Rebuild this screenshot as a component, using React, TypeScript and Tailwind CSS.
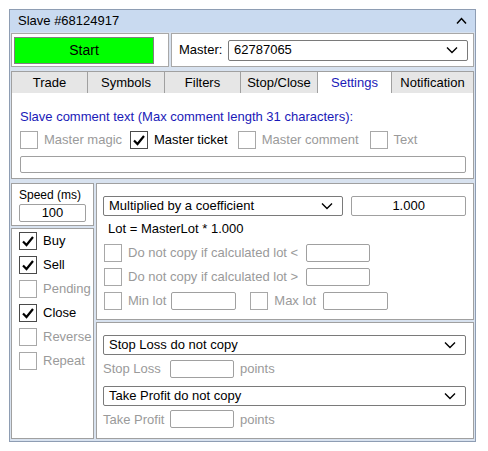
import React from 'react';

const font = { fontFamily: '"Liberation Sans", Arial, sans-serif' };

function Check({ checked = false, disabled = false, label }: { checked?: boolean; disabled?: boolean; label?: string }) {
  return (
    <div className="flex items-center">
      <div
        className={`w-[18px] h-[18px] bg-white border flex items-center justify-center shrink-0 ${
          disabled ? 'border-[#a8a8a8]' : 'border-[#4a4a4a]'
        }`}
      >
        {checked && (
          <svg width="14" height="14" viewBox="0 0 14 14">
            <path d="M2 7.5 L5.5 11 L12 3" fill="none" stroke="#000" strokeWidth="2.2" />
          </svg>
        )}
      </div>
      {label && (
        <span className={`ml-[6px] text-[13px] leading-4 whitespace-nowrap ${disabled ? 'text-[#9a9a9a]' : 'text-black'}`}>
          {label}
        </span>
      )}
    </div>
  );
}

function Chevron() {
  return (
    <svg width="12" height="8" viewBox="0 0 12 8" className="shrink-0">
      <path d="M1 1.5 L6 6.5 L11 1.5" fill="none" stroke="#000" strokeWidth="1.4" />
    </svg>
  );
}

function Select({ text, className = '' }: { text: string; className?: string }) {
  return (
    <div
      className={`h-[20px] bg-white border border-[#7a7a7a] rounded-[2px] flex items-center justify-between pl-[5px] pr-[9px] text-[13px] text-black ${className}`}
    >
      <span>{text}</span>
      <Chevron />
    </div>
  );
}

function Box({ className = '', children }: { className?: string; children?: React.ReactNode }) {
  return (
    <div className={`h-[18px] bg-white border border-[#a0a0a0] rounded-[2px] flex items-center justify-center text-[13px] text-black ${className}`}>
      {children}
    </div>
  );
}

const tabs = [
  { name: 'Trade', w: 'w-[76px]' },
  { name: 'Symbols', w: 'w-[77px]' },
  { name: 'Filters', w: 'w-[76px]' },
  { name: 'Stop/Close', w: 'w-[77px]' },
  { name: 'Settings', w: 'w-[74px]', active: true },
  { name: 'Notification', w: 'w-[83px]' },
];

export default function App() {
  return (
    <div className="w-[488px] h-[451px] bg-white pt-[9px] pl-[9px]" style={font}>
      <div className="w-[467px] h-[433px] border border-[#8e9db3] bg-[#d8e2ef] flex flex-col">
        {/* header */}
        <div className="h-[22px] bg-[#c9daf0] flex items-center justify-between pl-[8px] pr-[8px] text-[13px] text-black">
          <span>Slave #68124917</span>
          <svg width="11" height="8" viewBox="0 0 11 8">
            <path d="M1 6.5 L5.5 1.5 L10 6.5" fill="none" stroke="#000" strokeWidth="1.5" />
          </svg>
        </div>

        {/* start / master */}
        <div className="mt-[1px] ml-[1px] flex gap-[2px] h-[34px]">
          <div className="w-[158px] bg-white border border-[#a8a8a8] flex items-center pl-[2px]">
            <div className="w-[140px] h-[27px] bg-[#00ff00] border border-[#808080] flex items-center justify-center text-[14px] text-black">
              Start
            </div>
          </div>
          <div className="w-[303px] bg-white border border-[#a8a8a8] flex items-center pl-[7px]">
            <span className="text-[13px] text-black w-[49px]">Master:</span>
            <Select text="62787065" className="w-[240px] h-[21px]" />
          </div>
        </div>

        {/* tabs */}
        <div className="mt-[4px] ml-[1px] flex h-[22px]">
          {tabs.map((t, i) => (
            <div
              key={t.name}
              className={`${t.w} border-t border-l border-[#a0a0a0] ${i === tabs.length - 1 ? 'border-r' : ''} flex items-center justify-center text-[13px] ${
                t.active ? 'bg-white text-[#1a1ab8]' : 'bg-[#e6e6e6] text-black'
              }`}
            >
              {t.name}
            </div>
          ))}
        </div>

        {/* settings content */}
        <div className="ml-[1px] w-[463px] h-[86px] bg-white border-l border-r border-b border-[#a0a0a0] pl-[8px] pr-[7px]">
          <div className="mt-[16px] text-[13px] leading-4 text-[#1a1ab8]">
            Slave comment text (Max comment length 31 characters):
          </div>
          <div className="mt-[6px] flex items-center">
            <Check disabled label="Master magic" />
            <div className="ml-[8px]">
              <Check checked label="Master ticket" />
            </div>
            <div className="ml-[10px]">
              <Check disabled label="Master comment" />
            </div>
            <div className="ml-[11px]">
              <Check disabled label="Text" />
            </div>
          </div>
          <div className="mt-[7px] h-[17px] border border-[#a0a0a0] rounded-[2px] bg-white" />
        </div>

        {/* lower */}
        <div className="mt-[4px] ml-[1px] flex gap-[2px] h-[256px]">
          <div className="w-[83px] flex flex-col gap-[2px]">
            <div className="h-[43px] bg-white border border-[#a0a0a0] px-[7px] pt-[4px]">
              <div className="text-[12px] leading-[14px] text-black">Speed (ms)</div>
              <Box className="mt-[2px] h-[17px] w-[67px]">100</Box>
            </div>
            <div className="flex-1 bg-white border border-[#a0a0a0] pl-[7px] overflow-hidden">
              {[
                { l: 'Buy', c: true },
                { l: 'Sell', c: true },
                { l: 'Pending', d: true },
                { l: 'Close', c: true },
                { l: 'Reverse', d: true },
                { l: 'Repeat', d: true },
              ].map((r) => (
                <div key={r.l} className="h-[24px] flex items-center">
                  <Check checked={r.c} disabled={r.d} label={r.l} />
                </div>
              ))}
            </div>
          </div>

          <div className="w-[378px] flex flex-col gap-[2px]">
            <div className="h-[137px] bg-white border border-[#a0a0a0] pl-[6px] pr-[7px]">
              <div className="mt-[12px] flex items-center gap-[8px]">
                <Select text="Multiplied by a coefficient" className="w-[241px]" />
                <Box className="w-[115px] h-[20px]">1.000</Box>
              </div>
              <div className="mt-[5px] ml-[5px] text-[13px] leading-4 text-black">Lot = MasterLot * 1.000</div>
              <div className="mt-[4px] ml-[1px]">
                <div className="h-[24px] flex items-center">
                  <Check disabled label="Do not copy if calculated lot <" />
                  <Box className="ml-[8px] w-[64px]" />
                </div>
                <div className="h-[24px] flex items-center">
                  <Check disabled label="Do not copy if calculated lot >" />
                  <Box className="ml-[8px] w-[64px]" />
                </div>
                <div className="h-[24px] flex items-center">
                  <Check disabled label="Min lot" />
                  <Box className="ml-[5px] w-[65px]" />
                  <div className="ml-[14px]">
                    <Check disabled label="Max lot" />
                  </div>
                  <Box className="ml-[7px] w-[65px]" />
                </div>
              </div>
            </div>

            <div className="flex-1 bg-white border border-[#a0a0a0] pl-[6px] pr-[7px]">
              <Select text="Stop Loss do not copy" className="mt-[12px] w-[363px]" />
              <div className="mt-[4px] flex items-center text-[13px] text-[#9a9a9a]">
                <span className="w-[67px]">Stop Loss</span>
                <Box className="w-[64px]" />
                <span className="ml-[6px]">points</span>
              </div>
              <Select text="Take Profit do not copy" className="mt-[7px] w-[363px]" />
              <div className="mt-[4px] flex items-center text-[13px] text-[#9a9a9a]">
                <span className="w-[67px]">Take Profit</span>
                <Box className="w-[64px]" />
                <span className="ml-[6px]">points</span>
              </div>
            </div>
          </div>
        </div>
      </div>
    </div>
  );
}
